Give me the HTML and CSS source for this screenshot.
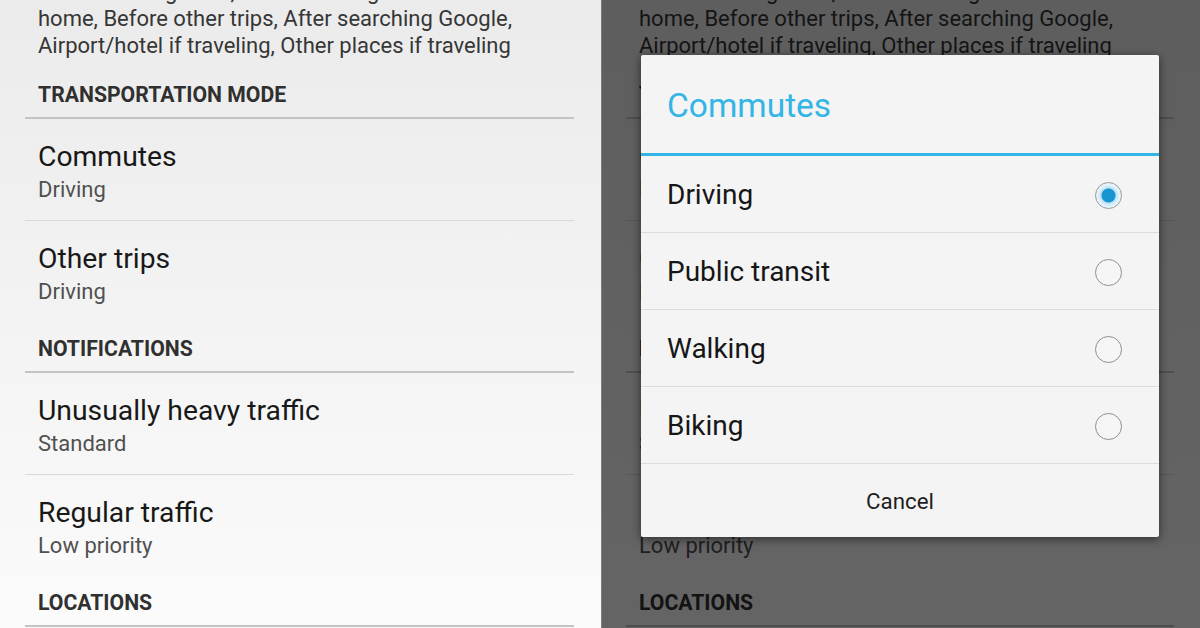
FILE: index.html
```html
<!DOCTYPE html>
<html lang="en">
<head>
<meta charset="utf-8">
<title>Commutes settings</title>
<link rel="stylesheet" href="styles.css">
</head>
<body>
<div class="screen">
  <section class="panel">
    <div class="list">
      <p class="desc">Before leaving work, Before leaving<br>home, Before other trips, After searching Google,<br>Airport/hotel if traveling, Other places if traveling</p>
      <div class="group">
        <div class="header">TRANSPORTATION MODE</div>
        <div class="item"><div class="title">Commutes</div><div class="sub">Driving</div></div>
        <div class="item"><div class="title">Other trips</div><div class="sub">Driving</div></div>
      </div>
      <div class="group">
        <div class="header">NOTIFICATIONS</div>
        <div class="item"><div class="title">Unusually heavy traffic</div><div class="sub">Standard</div></div>
        <div class="item"><div class="title">Regular traffic</div><div class="sub">Low priority</div></div>
      </div>
      <div class="group">
        <div class="header">LOCATIONS</div>
      </div>
    </div>
  </section>

  <section class="panel panel-dim">
    <div class="list">
      <p class="desc">Before leaving work, Before leaving<br>home, Before other trips, After searching Google,<br>Airport/hotel if traveling, Other places if traveling</p>
      <div class="group">
        <div class="header">TRANSPORTATION MODE</div>
        <div class="item"><div class="title">Commutes</div><div class="sub">Driving</div></div>
        <div class="item"><div class="title">Other trips</div><div class="sub">Driving</div></div>
      </div>
      <div class="group">
        <div class="header">NOTIFICATIONS</div>
        <div class="item"><div class="title">Unusually heavy traffic</div><div class="sub">Standard</div></div>
        <div class="item"><div class="title">Regular traffic</div><div class="sub">Low priority</div></div>
      </div>
      <div class="group">
        <div class="header">LOCATIONS</div>
      </div>
    </div>
    <div class="scrim"></div>
    <div class="dialog">
      <div class="dialog-title">Commutes</div>
      <div class="option"><span>Driving</span><span class="radio on"></span></div>
      <div class="option"><span>Public transit</span><span class="radio"></span></div>
      <div class="option"><span>Walking</span><span class="radio"></span></div>
      <div class="option"><span>Biking</span><span class="radio"></span></div>
      <div class="cancel">Cancel</div>
    </div>
  </section>
</div>
</body>
</html>
```

FILE: styles.css
```css
html, body {
  margin: 0;
  padding: 0;
}

body {
  font-family: Roboto, "Noto Sans", "Liberation Sans", sans-serif;
  width: 1200px;
  height: 628px;
  overflow: hidden;
}

.screen {
  display: flex;
  width: 1200px;
  height: 628px;
  overflow: hidden;
}

.panel {
  position: relative;
  flex: none;
  width: 601px;
  height: 628px;
  overflow: hidden;
  background: linear-gradient(#ebebeb, #fbfbfb);
}

.panel-dim {
  width: 599px;
}

.list {
  padding: 0 27px 0 25px;
}

.panel-dim .list {
  padding: 0 26px 0 25px;
}

.desc {
  margin: -22px 0 9px 13px;
  font-size: 22px;
  line-height: 27px;
  color: #363636;
  white-space: nowrap;
}

.header {
  padding: 15px 0 10px 13px;
  font-size: 21.2px;
  font-weight: 700;
  line-height: 24px;
  color: #303030;
  border-bottom: 2px solid #c3c3c3;
}

.item {
  padding: 22px 0 17px 13px;
}

.item:not(:last-child) {
  border-bottom: 1px solid #dadada;
}

.title {
  font-size: 28.3px;
  line-height: 32px;
  color: #181818;
  white-space: nowrap;
}

.sub {
  margin-top: 4px;
  font-size: 22px;
  line-height: 26px;
  color: #505050;
}

.scrim {
  position: absolute;
  inset: 0;
  background: rgba(0, 0, 0, 0.6);
  box-shadow: inset 1px 0 0 rgba(255, 255, 255, 0.18);
}

.dialog {
  position: absolute;
  left: 40px;
  top: 55px;
  width: 518px;
  height: 482px;
  display: flex;
  flex-direction: column;
  background: #f4f4f4;
  border-radius: 2px;
  box-shadow: 0 2px 10px rgba(0, 0, 0, 0.55);
  overflow: hidden;
}

.dialog-title {
  padding: 31px 26px 27px;
  font-size: 33.5px;
  line-height: 40px;
  color: #33b5e5;
  border-bottom: 3px solid #33b5e5;
}

.option {
  box-sizing: border-box;
  height: 77px;
  display: flex;
  align-items: center;
  justify-content: space-between;
  padding: 2px 37px 0 26px;
  font-size: 28px;
  line-height: 32px;
  color: #161616;
  border-bottom: 1px solid #dcdcdc;
}

.radio {
  box-sizing: border-box;
  width: 27px;
  height: 27px;
  border-radius: 50%;
  border: 1.5px solid #8f8f8f;
  background: #f6f6f6;
}

.radio.on {
  border-color: #999999;
  background: radial-gradient(circle, #1a95d3 0, #1a95d3 6.5px, #bfe2f3 7.5px, #e6f4fb 11px);
}

.cancel {
  flex: 1;
  display: flex;
  align-items: center;
  justify-content: center;
  font-size: 22.3px;
  color: #1e1e1e;
}
```
